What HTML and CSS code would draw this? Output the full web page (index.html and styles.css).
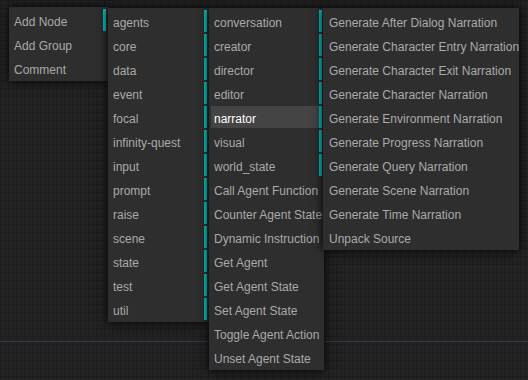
FILE: index.html
```html
<!DOCTYPE html>
<html lang="en">
<head>
    <meta charset="UTF-8">
    <meta name="viewport" content="width=device-width, initial-scale=1.0">
    <title>Node Graph</title>
    <link rel="stylesheet" href="styles.css">
</head>
<body>

    <div class="graph-canvas">
        <div class="link-line"></div>

        <!-- Root context menu -->
        <div class="context-menu menu-root">
            <div class="menu-entry has-submenu">Add Node</div>
            <div class="menu-entry">Add Group</div>
            <div class="menu-entry">Comment</div>
        </div>

        <!-- Categories -->
        <div class="context-menu menu-categories">
            <div class="menu-entry has-submenu">agents</div>
            <div class="menu-entry has-submenu">core</div>
            <div class="menu-entry has-submenu">data</div>
            <div class="menu-entry has-submenu">event</div>
            <div class="menu-entry has-submenu">focal</div>
            <div class="menu-entry has-submenu">infinity-quest</div>
            <div class="menu-entry has-submenu">input</div>
            <div class="menu-entry has-submenu">prompt</div>
            <div class="menu-entry has-submenu">raise</div>
            <div class="menu-entry has-submenu">scene</div>
            <div class="menu-entry has-submenu">state</div>
            <div class="menu-entry has-submenu">test</div>
            <div class="menu-entry has-submenu">util</div>
        </div>

        <!-- Agents -->
        <div class="context-menu menu-agents">
            <div class="menu-entry has-submenu">conversation</div>
            <div class="menu-entry has-submenu">creator</div>
            <div class="menu-entry has-submenu">director</div>
            <div class="menu-entry has-submenu">editor</div>
            <div class="menu-entry has-submenu active">narrator</div>
            <div class="menu-entry has-submenu">visual</div>
            <div class="menu-entry has-submenu">world_state</div>
            <div class="menu-entry">Call Agent Function</div>
            <div class="menu-entry">Counter Agent State</div>
            <div class="menu-entry">Dynamic Instruction</div>
            <div class="menu-entry">Get Agent</div>
            <div class="menu-entry">Get Agent State</div>
            <div class="menu-entry">Set Agent State</div>
            <div class="menu-entry">Toggle Agent Action</div>
            <div class="menu-entry">Unset Agent State</div>
        </div>

        <!-- Narrator nodes -->
        <div class="context-menu menu-narrator">
            <div class="menu-entry">Generate After Dialog Narration</div>
            <div class="menu-entry">Generate Character Entry Narration</div>
            <div class="menu-entry">Generate Character Exit Narration</div>
            <div class="menu-entry">Generate Character Narration</div>
            <div class="menu-entry">Generate Environment Narration</div>
            <div class="menu-entry">Generate Progress Narration</div>
            <div class="menu-entry">Generate Query Narration</div>
            <div class="menu-entry">Generate Scene Narration</div>
            <div class="menu-entry">Generate Time Narration</div>
            <div class="menu-entry">Unpack Source</div>
        </div>
    </div>

</body>
</html>
```

FILE: styles.css
```css
body {
    margin: 0;
    background-color: #222;
    font-family: "Liberation Sans", Arial, sans-serif;
    overflow: hidden;
}
.graph-canvas {
    position: relative;
    width: 528px;
    height: 380px;
    background-color: #222;
    background-image:
        linear-gradient(to right, #1c1c1c 1px, transparent 1px),
        linear-gradient(to bottom, #1c1c1c 1px, transparent 1px);
    background-size: 8px 8px;
}
.link-line {
    position: absolute;
    left: 0;
    right: 0;
    top: 341px;
    height: 1px;
    background-color: #2b3950;
}
.context-menu {
    position: absolute;
    padding: 0;
    background-color: #2e2e2e;
    box-shadow: 0 0 10px black;
    color: #aaa;
    font-size: 12px;
}
.menu-root {
    left: 9px;
    top: 7px;
    width: 99px;
}
.menu-categories {
    left: 108px;
    top: 8px;
    width: 101px;
}
.menu-agents {
    left: 209px;
    top: 8px;
    width: 115px;
}
.menu-narrator {
    left: 323px;
    top: 8px;
    width: 196px;
}
.menu-entry {
    margin: 2px;
    padding-left: 3px;
    padding-top: 2px;
    height: 20px;
    line-height: 22px;
    white-space: nowrap;
    cursor: pointer;
}
.menu-narrator .menu-entry {
    padding-left: 4px;
}
.menu-entry.has-submenu {
    border-right: 3px solid #00c4c4;
}
.menu-entry.active {
    background-color: #444;
    color: #fff;
}
```
